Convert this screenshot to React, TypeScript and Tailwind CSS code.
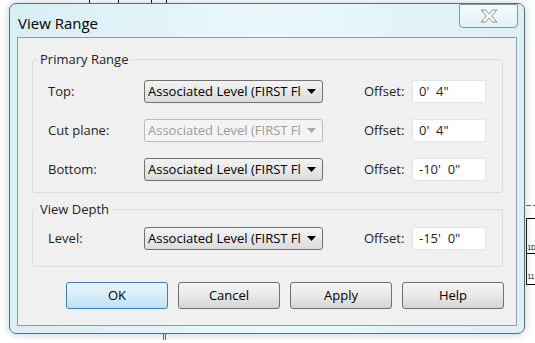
import React from 'react';

/** View Range dialog — Windows 7 aero frame over a CAD sheet. */

const font = { fontFamily: '"Segoe UI", "Open Sans", "Noto Sans", sans-serif' };

function Arrow({ disabled }: { disabled?: boolean }) {
  return (
    <svg width="9" height="5" viewBox="0 0 9 5" className="shrink-0">
      <path d="M0 0 H9 L4.5 5 Z" fill={disabled ? '#a8a8a8' : '#000'} />
    </svg>
  );
}

function LevelSelect({ disabled }: { disabled?: boolean }) {
  return (
    <div
      className={
        disabled
          ? 'flex h-[23px] w-[179px] items-center justify-between gap-[6px] rounded-[3px] border border-[#b8bcbf] bg-[#f4f4f4] pl-[3px] pr-[6px] text-[#9c9c9c]'
          : 'flex h-[23px] w-[179px] items-center justify-between gap-[6px] rounded-[3px] border border-[#707070] bg-gradient-to-b from-[#f3f3f3] to-[#dcdcdc] pl-[3px] pr-[6px] text-black'
      }
    >
      <span className="overflow-hidden whitespace-nowrap">Associated Level (FIRST Fl</span>
      <Arrow disabled={disabled} />
    </div>
  );
}

function Row({ label, offset, disabled }: { label: string; offset: string; disabled?: boolean }) {
  return (
    <div className="flex h-[23px] items-center">
      <span className="w-[111px] pl-[15px]">{label}</span>
      <LevelSelect disabled={disabled} />
      <span className="ml-[41px] w-[48px]">Offset:</span>
      <div className="flex h-[23px] w-[74px] items-center border border-[#e2e6ea] bg-white pl-[6px] whitespace-pre">
        {offset}
      </div>
    </div>
  );
}

function Group({ title, children, className }: { title: string; children: React.ReactNode; className: string }) {
  return (
    <div className={`relative ml-[14px] mr-[13px] rounded-[3px] border border-[#d8dcdf] ${className}`}>
      <span className="absolute -top-[9px] left-[4px] bg-[#f0f0f0] px-[3px] leading-[16px]">{title}</span>
      {children}
    </div>
  );
}

function Button({ label, primary }: { label: string; primary?: boolean }) {
  return (
    <button
      className={
        primary
          ? 'h-[27px] w-[102px] rounded-[3px] border border-[#3c7fb1] bg-gradient-to-b from-[#e8f5fd] via-[#d6edfa] to-[#bfe1f4] text-black'
          : 'h-[27px] w-[102px] rounded-[3px] border border-[#707070] bg-gradient-to-b from-[#f3f3f3] via-[#e9e9e9] to-[#d4d4d4] text-black'
      }
    >
      {label}
    </button>
  );
}

export default function App() {
  return (
    <div className="relative h-[343px] w-[535px] overflow-hidden bg-white text-[13px] text-[#1e1e1e]" style={font}>
      {/* sheet behind the dialog */}
      <svg className="absolute inset-0" width="535" height="343">
        <g stroke="#000" strokeWidth="1">
          <line x1="89.5" y1="0" x2="89.5" y2="4" />
          <line x1="118.5" y1="0" x2="118.5" y2="4" />
          <line x1="151.5" y1="0" x2="151.5" y2="4" />
          <line x1="166.5" y1="0" x2="166.5" y2="4" />
          <line x1="526" y1="218.5" x2="535" y2="218.5" />
          <line x1="526" y1="253.5" x2="535" y2="253.5" />
          <line x1="526" y1="284.5" x2="535" y2="284.5" />
          <line x1="526.5" y1="218" x2="526.5" y2="285" />
        </g>
        <line x1="526" y1="205.5" x2="535" y2="205.5" stroke="#1d8a1d" strokeDasharray="5 2" />
        <line x1="163.5" y1="334" x2="163.5" y2="340" stroke="#1d8a1d" />
        <line x1="165.5" y1="334" x2="165.5" y2="340" stroke="#1d8a1d" />
        <text x="527.5" y="250" fontSize="6.5" fontFamily="Liberation Sans, sans-serif" fill="#000">1D</text>
        <text x="527.5" y="279" fontSize="6.5" fontFamily="Liberation Sans, sans-serif" fill="#000">11</text>
      </svg>

      {/* dialog window */}
      <div className="absolute left-[9px] top-[3px] flex h-[331px] w-[516px] flex-col rounded-[7px] border border-[#5f6d73] bg-gradient-to-r from-[#d8eef5] via-[#eaf8fc] to-[#dcf0f6] px-[7px] pb-[7px] shadow-[0_0_8px_rgba(120,160,180,0.5)]">
        <div className="flex h-[33px] shrink-0 items-start justify-between">
          <span className="mt-[9px] ml-[1px] text-[15px] leading-[20px] text-black">View Range</span>
          <div className="mr-[-1px] flex h-[24px] w-[59px] items-center justify-center rounded-b-[4px] rounded-t-[2px] border border-[#8596a0] bg-gradient-to-b from-[#f4fbfd] to-[#e3f1f6]">
            <svg width="18" height="14" viewBox="0 0 18 14">
              <path
                d="M1 1 H5.5 L9 5 L12.5 1 H17 L11.5 7 L17 13 H12.5 L9 9 L5.5 13 H1 L6.5 7 Z"
                fill="#fff"
                stroke="#8a8f94"
                strokeWidth="1"
                strokeLinejoin="round"
              />
            </svg>
          </div>
        </div>

        <div className="flex flex-1 flex-col border border-[#8c9ca4] bg-[#f0f0f0] pt-[21px]">
          <Group title="Primary Range" className="flex flex-col gap-[16px] pb-[11px] pt-[20px]">
            <Row label="Top:" offset={`0'  4"`} />
            <Row label="Cut plane:" offset={`0'  4"`} disabled />
            <Row label="Bottom:" offset={`-10'  0"`} />
          </Group>

          <Group title="View Depth" className="mt-[16px] pb-[16px] pt-[17px]">
            <Row label="Level:" offset={`-15'  0"`} />
          </Group>

          <div className="ml-[48px] mt-[15px] flex gap-[10px]">
            <Button label="OK" primary />
            <Button label="Cancel" />
            <Button label="Apply" />
            <Button label="Help" />
          </div>
        </div>
      </div>
    </div>
  );
}
